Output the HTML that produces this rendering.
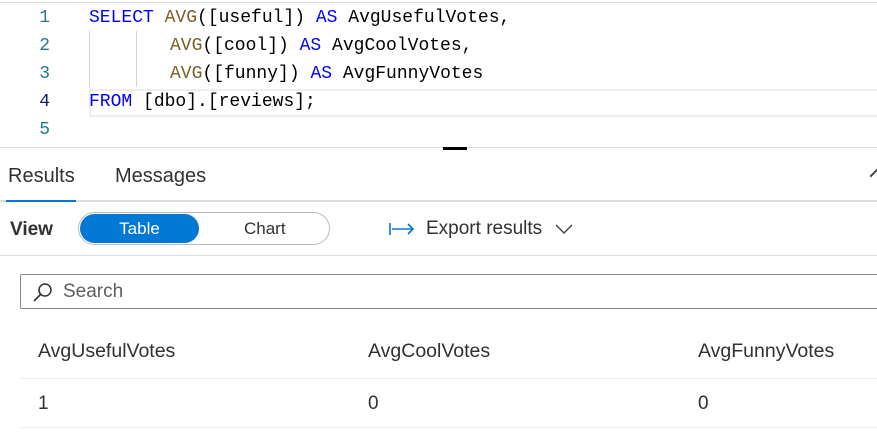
<!DOCTYPE html>
<html><head><style>
body{margin:0;width:877px;height:433px;background:#fff;position:relative;overflow:hidden;font-family:"Liberation Sans",sans-serif;color:#323130}
.a{position:absolute;white-space:nowrap}
.code{font-family:"Liberation Mono",monospace;font-size:18px;color:#000}
.ln{font-family:"Liberation Mono",monospace;font-size:18px;color:#237893;width:20px;text-align:right}
.k{color:#0000ff}.f{color:#795e26}.o{color:#000}
</style></head><body>
<div class="a" style="left:0;top:2px;width:877px;height:1px;background:#ddd"></div>
<div class="a" style="left:89px;top:89px;width:788px;height:24px;border:2px solid #eee;border-right:none"></div>
<div class="a" style="left:89px;top:31px;width:1px;height:56px;background:#d4d4d4"></div>
<div class="a" style="left:136px;top:31px;width:1px;height:56px;background:#d4d4d4"></div>
<div class="a ln" style="left:30px;top:8px">1</div>
<div class="a ln" style="left:30px;top:36px">2</div>
<div class="a ln" style="left:30px;top:64px">3</div>
<div class="a ln" style="left:30px;top:92px;color:#0b216f">4</div>
<div class="a ln" style="left:30px;top:120px">5</div>
<div class="a code" style="left:89px;top:8px"><span class="k">SELECT</span> <span class="f">AVG</span>([useful]) <span class="k">AS</span> AvgUsefulVotes,</div>
<div class="a code" style="left:170px;top:36px"><span class="f">AVG</span>([cool]) <span class="k">AS</span> AvgCoolVotes,</div>
<div class="a code" style="left:170px;top:64px"><span class="f">AVG</span>([funny]) <span class="k">AS</span> AvgFunnyVotes</div>
<div class="a code" style="left:89px;top:92px"><span class="k">FROM</span> [dbo].[reviews];</div>
<div class="a" style="left:0;top:147px;width:877px;height:1px;background:#ddd"></div>
<div class="a" style="left:443px;top:147px;width:24px;height:3px;background:#000"></div>
<div class="a" style="left:8px;top:165px;font-size:20px;color:#323130">Results</div>
<div class="a" style="left:115px;top:165px;font-size:20px;color:#323130">Messages</div>
<div class="a" style="left:872px;top:170px;width:10px;height:10px;border-left:2px solid #444;border-top:2px solid #444;transform:rotate(45deg)"></div>
<div class="a" style="left:0;top:200px;width:877px;height:2px;background:#ddd"></div>
<div class="a" style="left:6px;top:200px;width:70px;height:2px;background:#0078d4"></div>
<div class="a" style="left:10px;top:219px;font-size:19px;font-weight:bold;color:#323130">View</div>
<div class="a" style="left:78px;top:212px;width:250px;height:31px;border:1px solid #bbb;border-radius:17px"></div>
<div class="a" style="left:80px;top:214px;width:119px;height:29px;background:#0078d4;border-radius:15px;color:#fff;font-size:17px;text-align:center;line-height:29px">Table</div>
<div class="a" style="left:244px;top:219px;font-size:17px;color:#323130">Chart</div>
<svg class="a" style="left:389px;top:222px" width="26" height="14"><path d="M1 1V13M3 7H24M19 2L24 7L19 12" stroke="#0078d4" stroke-width="1.6" fill="none"/></svg>
<div class="a" style="left:426px;top:218px;font-size:19px;color:#323130">Export results</div>
<svg class="a" style="left:555px;top:223px" width="18" height="12"><path d="M1 2L9 10L17 2" stroke="#444" stroke-width="1.4" fill="none"/></svg>
<div class="a" style="left:0;top:255px;width:877px;height:1px;background:#ddd"></div>
<div class="a" style="left:20px;top:274px;width:870px;height:33px;border:1px solid #8a8886;border-radius:2px"></div>
<svg class="a" style="left:32px;top:281px" width="22" height="22"><circle cx="13" cy="9" r="6" stroke="#323130" stroke-width="1.5" fill="none"/><path d="M9 13L2 20" stroke="#323130" stroke-width="1.6"/></svg>
<div class="a" style="left:63px;top:281px;font-size:19px;color:#605e5c">Search</div>
<div class="a" style="left:38px;top:340px;font-size:19.5px">AvgUsefulVotes</div>
<div class="a" style="left:368px;top:340px;font-size:19.5px">AvgCoolVotes</div>
<div class="a" style="left:698px;top:340px;font-size:19.5px">AvgFunnyVotes</div>
<div class="a" style="left:20px;top:378px;width:857px;height:1px;background:#eee"></div>
<div class="a" style="left:38px;top:393px;font-size:19px">1</div>
<div class="a" style="left:368px;top:393px;font-size:19px">0</div>
<div class="a" style="left:698px;top:393px;font-size:19px">0</div>
<div class="a" style="left:20px;top:427px;width:857px;height:1px;background:#eee"></div>
</body></html>
